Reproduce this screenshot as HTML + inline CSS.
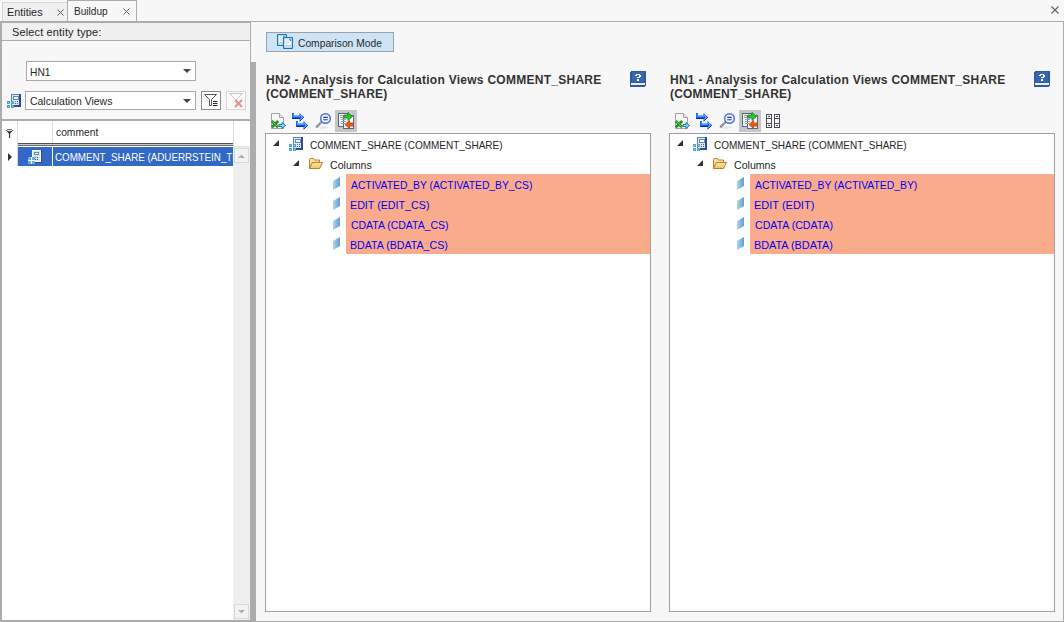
<!DOCTYPE html>
<html><head><meta charset="utf-8">
<style>
*{box-sizing:border-box;margin:0;padding:0}
html,body{width:1064px;height:622px;overflow:hidden;background:#f7f7f7;font-family:"Liberation Sans",sans-serif;font-size:11px;color:#262626}
.a{position:absolute}
.t{position:absolute;white-space:nowrap;line-height:13px;height:13px}
.ln{position:absolute;background:#acacac}
.b{font-weight:bold;font-size:12px;color:#333}
.bl{color:#0000f8}
svg{position:absolute;overflow:visible}
</style></head><body>
<div class="a" style="left:2px;top:2px;width:66px;height:20px;background:#f0f0f0;border:1px solid #d6d6d6;border-bottom:none;border-right:none"></div>
<div class="t" style="left:7px;top:6px;transform:scaleX(0.986);transform-origin:0 0;">Entities</div>
<svg style="left:57px;top:9px" width="7" height="7"><path d="M0.5 0.5L6.5 6.5M6.5 0.5L0.5 6.5" stroke="#606060" stroke-width="1"/></svg>
<div class="a" style="left:67px;top:0px;width:70px;height:22px;background:#f7f7f7;border:1px solid #acacac;border-bottom:none"></div>
<div class="t" style="left:74px;top:5px;transform:scaleX(0.917);transform-origin:0 0;">Buildup</div>
<svg style="left:123px;top:8px" width="7" height="7"><path d="M0.5 0.5L6.5 6.5M6.5 0.5L0.5 6.5" stroke="#606060" stroke-width="1"/></svg>
<svg style="left:1051px;top:6px" width="8" height="8"><path d="M0.5 0.5L7.5 7.5M7.5 0.5L0.5 7.5" stroke="#606060" stroke-width="1.1"/></svg>
<div class="ln" style="left:0;top:21px;width:1064px;height:1px"></div>
<div class="ln" style="left:0;top:22px;width:251px;height:1px"></div>
<div class="ln" style="left:0;top:21px;width:2px;height:601px"></div>
<div class="ln" style="left:0;top:620px;width:251px;height:2px"></div>
<div class="ln" style="left:250px;top:21px;width:1px;height:601px"></div>
<div class="ln" style="left:1063px;top:21px;width:1px;height:601px"></div>
<div class="ln" style="left:251px;top:621px;width:813px;height:1px"></div>
<div class="a" style="left:2px;top:23px;width:248px;height:17px;background:#f0f0f0;"></div>
<div class="a" style="left:2px;top:40px;width:248px;height:1px;background:#acacac;"></div>
<div class="t" style="left:12px;top:26px;letter-spacing:0.14px;">Select entity type:</div>
<div class="a" style="left:26px;top:61px;width:170px;height:20px;background:#fff;border:1px solid #a8a8a8"></div>
<div class="t" style="left:30px;top:66px;transform:scaleX(0.93);transform-origin:0 0;">HN1</div>
<svg style="left:183px;top:69px" width="8" height="4"><path d="M0 0H8L4 4Z" fill="#444"/></svg>
<div class="a" style="left:25px;top:91px;width:171px;height:19px;background:#fff;border:1px solid #a8a8a8"></div>
<div class="t" style="left:30px;top:95px;transform:scaleX(0.951);transform-origin:0 0;">Calculation Views</div>
<svg style="left:183px;top:99px" width="8" height="4"><path d="M0 0H8L4 4Z" fill="#444"/></svg>
<svg style="left:5px;top:93px" width="16" height="16" shape-rendering="crispEdges">
 <rect x="6" y="1" width="10" height="13" fill="#2c4c98"/>
 <rect x="6" y="1" width="8" height="11" fill="#5f82c4"/>
 <rect x="7" y="2" width="7" height="10" fill="#d8e8f8"/>
 <rect x="8" y="3" width="6" height="4" fill="#6288c8"/>
 <rect x="9" y="4" width="4" height="2" fill="#fff"/>
 <rect x="10" y="8" width="1" height="1" fill="#1fae3a"/><rect x="12" y="8" width="1" height="1" fill="#e82020"/>
 <rect x="10" y="10" width="1" height="1" fill="#555"/><rect x="12" y="10" width="1" height="1" fill="#555"/>
 <rect x="2" y="8" width="3" height="3" fill="#52a0dc"/><rect x="6" y="8" width="3" height="3" fill="#52a0dc"/>
 <rect x="2" y="12" width="3" height="3" fill="#52a0dc"/><rect x="6" y="12" width="3" height="3" fill="#52a0dc"/>
 <rect x="3" y="9" width="1" height="1" fill="#8cc4ec"/><rect x="7" y="9" width="1" height="1" fill="#8cc4ec"/>
 <rect x="3" y="13" width="1" height="1" fill="#8cc4ec"/><rect x="7" y="13" width="1" height="1" fill="#8cc4ec"/>
</svg>
<div class="a" style="left:201px;top:91px;width:20px;height:19px;background:#fff;border:1px solid #8c8c8c"></div>
<svg style="left:201px;top:91px" width="20" height="19">
 <path d="M3.5 3.5H15.5L10.5 8.5V14.5H8.5V8.5Z" fill="none" stroke="#555" stroke-width="1"/>
 <path d="M12 10.5H16.5M12 12.5H16.5M12 14.5H16.5" stroke="#222" stroke-width="1.2"/>
</svg>
<div class="a" style="left:226px;top:91px;width:20px;height:19px;background:#f9f9f9;border:1px solid #d8d8d8"></div>
<svg style="left:226px;top:91px" width="20" height="19">
 <path d="M3.5 2.5H16.5L11 8V13" fill="none" stroke="#c8c8c8" stroke-width="1"/>
 <path d="M3.5 2.5L9 8" fill="none" stroke="#c8c8c8" stroke-width="1"/>
 <path d="M9 9L16 16M16 9L9 16" stroke="#e79393" stroke-width="2.2"/>
</svg>
<div class="a" style="left:2px;top:119px;width:248px;height:2px;background:#acacac;"></div>
<div class="a" style="left:2px;top:121px;width:248px;height:499px;background:#fff;"></div>
<div class="a" style="left:17px;top:121px;width:1px;height:45px;background:#dadada;"></div>
<div class="a" style="left:52px;top:121px;width:1px;height:22px;background:#dadada;"></div>
<div class="a" style="left:233px;top:121px;width:1px;height:25px;background:#dadada;"></div>
<div class="a" style="left:18px;top:143px;width:215px;height:1px;background:#505050;"></div>
<div class="a" style="left:18px;top:144px;width:215px;height:1px;background:#c8c8c8;"></div>
<div class="a" style="left:18px;top:145px;width:215px;height:1px;background:#6a6a6a;"></div>
<div class="t" style="left:56px;top:126px;transform:scaleX(0.935);transform-origin:0 0;">comment</div>
<svg style="left:6px;top:129px" width="7" height="9">
 <path d="M0.3 1.8Q3.5 5.2 3 5.2H4Q3.5 5.2 6.7 1.8Z" fill="#333"/>
 <ellipse cx="3.5" cy="1.6" rx="2.9" ry="1.1" fill="#fff" stroke="#333" stroke-width="0.9"/>
 <rect x="3" y="5" width="1.1" height="4" fill="#333"/>
</svg>
<div class="a" style="left:18px;top:147px;width:34px;height:19px;background:#3268c6;"></div>
<div class="a" style="left:53px;top:147px;width:180px;height:19px;background:#3268c6;overflow:hidden"><div class="t" style="left:2px;top:4px;transform:scaleX(0.89);transform-origin:0 0;color:#fff">COMMENT_SHARE (ADUERRSTEIN_TEST)</div>
</div>
<svg style="left:8px;top:153px" width="4" height="8"><path d="M0 0L4 4L0 8Z" fill="#333"/></svg>
<svg style="left:26px;top:149px" width="16" height="16" shape-rendering="crispEdges">
 <rect x="6" y="1" width="10" height="13" fill="#2a4c98"/>
 <rect x="6" y="1" width="9" height="12" fill="#fff"/>
 <rect x="7" y="2" width="7" height="10" fill="#d6e6f8"/>
 <rect x="8" y="3" width="5" height="3" fill="#5b82c6"/>
 <rect x="9" y="4" width="3" height="1" fill="#fff"/>
 <rect x="9" y="8" width="1" height="1" fill="#1fae3a"/><rect x="11" y="8" width="1" height="1" fill="#e82020"/>
 <rect x="9" y="10" width="1" height="1" fill="#555"/><rect x="11" y="10" width="1" height="1" fill="#555"/>
 <rect x="2" y="8" width="7" height="7" fill="#6ab0e0"/>
 <rect x="5" y="8" width="1" height="7" fill="#fff"/><rect x="2" y="11" width="7" height="1" fill="#fff"/>
</svg>
<div class="a" style="left:233px;top:146px;width:17px;height:474px;background:#efefef;border-top:1px solid #e2e2e2"></div>
<div class="a" style="left:234px;top:148px;width:15px;height:15px;background:#f2f2f2;border:1px solid #d9d9d9"></div>
<svg style="left:238px;top:154px" width="7" height="4"><path d="M0 4H7L3.5 0.5Z" fill="#adadad"/></svg>
<div class="a" style="left:234px;top:604px;width:15px;height:15px;background:#f2f2f2;border:1px solid #d9d9d9"></div>
<svg style="left:238px;top:610px" width="7" height="4"><path d="M0 0H7L3.5 3.5Z" fill="#adadad"/></svg>
<div class="ln" style="left:250px;top:62px;width:6px;height:560px"></div>
<div class="a" style="left:266px;top:32px;width:128px;height:20px;background:#cde4f7;border:1px solid #a0a0a0"></div>
<svg style="left:276px;top:33px" width="18" height="17">
 <rect x="1.6" y="1.6" width="8.8" height="10.8" rx="0.4" fill="#fff" stroke="#1f74b6" stroke-width="1.3"/>
 <rect x="3" y="3.5" width="4" height="4.5" fill="#dcecf4"/><rect x="3" y="9" width="6" height="1.8" fill="#b0d4e6"/>
 <path d="M7.2 3Q8.6 3.2 8.9 4.8" fill="none" stroke="#1f74b6" stroke-width="1.2"/>
 <rect x="7.6" y="4.6" width="8.8" height="10.8" rx="0.4" fill="#fff" stroke="#1f74b6" stroke-width="1.3"/>
 <rect x="9" y="6.5" width="4" height="4.5" fill="#dcecf4"/><rect x="9" y="12" width="6" height="1.8" fill="#b0d4e6"/>
 <path d="M13.2 6Q14.6 6.2 14.9 7.8" fill="none" stroke="#1f74b6" stroke-width="1.2"/>
</svg>
<div class="t" style="left:298px;top:37px;transform:scaleX(0.933);transform-origin:0 0;">Comparison Mode</div>
<div class="a" style="left:0px;top:0;width:420px;height:622px">
<div class="t b" style="left:266px;top:74px;letter-spacing:0.27px;">HN2 - Analysis for Calculation Views COMMENT_SHARE</div>
<div class="t b" style="left:266px;top:88px;letter-spacing:0.18px;">(COMMENT_SHARE)</div>
<svg style="left:630px;top:71px" width="16" height="16" shape-rendering="crispEdges">
 <rect x="0" y="0" width="16" height="16" rx="2" fill="#2f5aa6"/>
 <rect x="2" y="1" width="12" height="10" fill="#3a67b4"/>
 <rect x="1" y="12" width="14" height="2" fill="#f2f2ea"/>
 <rect x="6" y="3" width="4" height="1" fill="#fff"/><rect x="5" y="4" width="2" height="1" fill="#fff"/><rect x="9" y="4" width="2" height="2" fill="#fff"/>
 <rect x="7" y="6" width="3" height="1" fill="#fff"/><rect x="7" y="8" width="2" height="2" fill="#fff"/>
</svg>
<div class="a" style="left:335px;top:110px;width:22px;height:22px;background:#c6c6c6;"></div>
<svg style="left:270px;top:112px" width="17" height="18">
 <path d="M1.5 1.5H9.5L13.5 5.5V16.5H1.5Z" fill="#f6f6f6" stroke="#a2a2a2"/>
 <path d="M9.5 1.5V5.5H13.5" fill="#e8e8e8" stroke="#a2a2a2"/>
 <path d="M1.8 9L8.2 15.2M8.2 9L1.8 15.2" stroke="#23901f" stroke-width="2.6"/><path d="M2.5 9.5L7.5 14.5" stroke="#8fe07a" stroke-width="0.7"/>
 <path d="M9 12.5H12V10.5L15.5 13.5L12 16.5V14.5H9Z" fill="#7ee6f2" stroke="#1d6fb4" stroke-width="1"/>
</svg>
<svg style="left:290px;top:111px" width="20" height="20">
 <path d="M2 2H4V4.5H9.5V2L14 6.2L9.5 10.5V8H2Z" fill="#0a5cf0"/>
 <path d="M2.5 7.5H9.5M9.8 10L13.7 6.2" stroke="#0026a8" stroke-width="0.9"/>
 <path d="M3.2 2.5V5.5H10" fill="none" stroke="#5fb0ff" stroke-width="0.8"/>
 <path d="M10.2 3.8L12.3 6.2L10.2 8.6" fill="none" stroke="#d8eeff" stroke-width="0.8"/>
 <path d="M6 10H8V12.5H13.5V10L18 14.2L13.5 18.5V16H6Z" fill="#0a5cf0"/>
 <path d="M6.5 15.5H13.5M13.8 18L17.7 14.2" stroke="#0026a8" stroke-width="0.9"/>
 <path d="M7.2 10.5V13.5H14" fill="none" stroke="#5fb0ff" stroke-width="0.8"/>
 <path d="M14.2 11.8L16.3 14.2L14.2 16.6" fill="none" stroke="#d8eeff" stroke-width="0.8"/>
</svg>
<svg style="left:314px;top:110px" width="19" height="20">
 <ellipse cx="8" cy="17.5" rx="6" ry="1.2" fill="#e6e6e6"/>
 <line x1="2.8" y1="16.6" x2="7.6" y2="12" stroke="#8c8c8c" stroke-width="2.4" stroke-linecap="round"/>
 <line x1="3.2" y1="16" x2="7" y2="12.5" stroke="#d8d8d8" stroke-width="0.8" stroke-dasharray="1 1"/>
 <circle cx="11.5" cy="8.5" r="4.8" fill="#f2f6ff" stroke="#4a72e6" stroke-width="1.5"/>
 <path d="M9.2 7.4H13.8M9.2 9.8H13.8" stroke="#1d3fb4" stroke-width="1.1"/>
</svg>
<svg style="left:336px;top:111px" width="20" height="20">
 <rect x="2.5" y="2.5" width="9" height="13" fill="#eef6fd" stroke="#56688a"/>
 <rect x="7.5" y="4.5" width="10" height="13" fill="#eef6fd" stroke="#56688a"/>
 <path d="M4 4.5H8M4 6.5H8M5 8.5H10M5 10.5H10M5 12.5H9" stroke="#8aa2c2" stroke-width="1"/>
 <path d="M5 4.5H6M5 6.5H6M6 8.5H7M6 10.5H7M6 12.5H7" stroke="#e0a820" stroke-width="1"/>
 <path d="M8 4H12V1.5L16.5 5.5L12 9.5V7H8Z" fill="#2cc42c" stroke="#138a13" stroke-width="0.8"/>
 <path d="M17.5 12H13.5V9.5L9 13.5L13.5 17.5V15H17.5Z" fill="#f25a14" stroke="#b83c0c" stroke-width="0.8"/>
</svg>
<div class="a" style="left:265px;top:133px;width:386px;height:479px;background:#fff;border:1px solid #a0a0a0"></div>
<div class="a" style="left:346px;top:174px;width:304px;height:80px;background:#f9ab8c;"></div>
<svg style="left:273px;top:140px" width="6" height="6"><path d="M6 0V6H0Z" fill="#333"/></svg>
<svg style="left:287px;top:136px" width="16" height="16" shape-rendering="crispEdges">
 <rect x="6" y="1" width="10" height="13" fill="#2c4c98"/>
 <rect x="6" y="1" width="8" height="11" fill="#5f82c4"/>
 <rect x="7" y="2" width="7" height="10" fill="#d8e8f8"/>
 <rect x="8" y="3" width="6" height="4" fill="#6288c8"/>
 <rect x="9" y="4" width="4" height="2" fill="#fff"/>
 <rect x="10" y="8" width="1" height="1" fill="#1fae3a"/><rect x="12" y="8" width="1" height="1" fill="#e82020"/>
 <rect x="10" y="10" width="1" height="1" fill="#555"/><rect x="12" y="10" width="1" height="1" fill="#555"/>
 <rect x="2" y="8" width="3" height="3" fill="#52a0dc"/><rect x="6" y="8" width="3" height="3" fill="#52a0dc"/>
 <rect x="2" y="12" width="3" height="3" fill="#52a0dc"/><rect x="6" y="12" width="3" height="3" fill="#52a0dc"/>
 <rect x="3" y="9" width="1" height="1" fill="#8cc4ec"/><rect x="7" y="9" width="1" height="1" fill="#8cc4ec"/>
 <rect x="3" y="13" width="1" height="1" fill="#8cc4ec"/><rect x="7" y="13" width="1" height="1" fill="#8cc4ec"/>
</svg>
<div class="t" style="left:310px;top:139px;transform:scaleX(0.908);transform-origin:0 0;">COMMENT_SHARE (COMMENT_SHARE)</div>
<svg style="left:293px;top:160px" width="6" height="6"><path d="M6 0V6H0Z" fill="#333"/></svg>
<svg style="left:308px;top:157px" width="16" height="13">
 <defs><linearGradient id="fg0" x1="0" y1="0" x2="0" y2="1"><stop offset="0" stop-color="#fbe7b0"/><stop offset="1" stop-color="#eec06a"/></linearGradient></defs>
 <path d="M1.5 11.5V2.5Q1.5 1.5 2.5 1.5H5.5L6.5 3H11.5V5.5" fill="url(#fg0)" stroke="#c47f24"/>
 <path d="M1.5 11.5L4.5 5.5H14.5L11.5 11.5Z" fill="url(#fg0)" stroke="#c47f24"/>
</svg>
<div class="t" style="left:330px;top:159px;transform:scaleX(0.963);transform-origin:0 0;">Columns</div>
<svg style="left:332px;top:176px" width="9" height="15"><defs><linearGradient id="cg00" x1="0" x2="1"><stop offset="0" stop-color="#b4d4ee"/><stop offset="1" stop-color="#5d9dd6"/></linearGradient></defs><path d="M1 5L8 1V10L1 14Z" fill="url(#cg00)"/></svg>
<div class="t bl" style="left:351px;top:179px;transform:scaleX(0.938);transform-origin:0 0;">ACTIVATED_BY (ACTIVATED_BY_CS)</div>
<svg style="left:332px;top:196px" width="9" height="15"><defs><linearGradient id="cg01" x1="0" x2="1"><stop offset="0" stop-color="#b4d4ee"/><stop offset="1" stop-color="#5d9dd6"/></linearGradient></defs><path d="M1 5L8 1V10L1 14Z" fill="url(#cg01)"/></svg>
<div class="t bl" style="left:350px;top:199px;transform:scaleX(0.9725);transform-origin:0 0;">EDIT (EDIT_CS)</div>
<svg style="left:332px;top:216px" width="9" height="15"><defs><linearGradient id="cg02" x1="0" x2="1"><stop offset="0" stop-color="#b4d4ee"/><stop offset="1" stop-color="#5d9dd6"/></linearGradient></defs><path d="M1 5L8 1V10L1 14Z" fill="url(#cg02)"/></svg>
<div class="t bl" style="left:351px;top:219px;transform:scaleX(0.951);transform-origin:0 0;">CDATA (CDATA_CS)</div>
<svg style="left:332px;top:236px" width="9" height="15"><defs><linearGradient id="cg03" x1="0" x2="1"><stop offset="0" stop-color="#b4d4ee"/><stop offset="1" stop-color="#5d9dd6"/></linearGradient></defs><path d="M1 5L8 1V10L1 14Z" fill="url(#cg03)"/></svg>
<div class="t bl" style="left:350px;top:239px;transform:scaleX(0.966);transform-origin:0 0;">BDATA (BDATA_CS)</div>
</div>
<div class="a" style="left:404px;top:0;width:420px;height:622px">
<div class="t b" style="left:266px;top:74px;letter-spacing:0.27px;">HN1 - Analysis for Calculation Views COMMENT_SHARE</div>
<div class="t b" style="left:266px;top:88px;letter-spacing:0.18px;">(COMMENT_SHARE)</div>
<svg style="left:630px;top:71px" width="16" height="16" shape-rendering="crispEdges">
 <rect x="0" y="0" width="16" height="16" rx="2" fill="#2f5aa6"/>
 <rect x="2" y="1" width="12" height="10" fill="#3a67b4"/>
 <rect x="1" y="12" width="14" height="2" fill="#f2f2ea"/>
 <rect x="6" y="3" width="4" height="1" fill="#fff"/><rect x="5" y="4" width="2" height="1" fill="#fff"/><rect x="9" y="4" width="2" height="2" fill="#fff"/>
 <rect x="7" y="6" width="3" height="1" fill="#fff"/><rect x="7" y="8" width="2" height="2" fill="#fff"/>
</svg>
<div class="a" style="left:335px;top:110px;width:22px;height:22px;background:#c6c6c6;"></div>
<svg style="left:270px;top:112px" width="17" height="18">
 <path d="M1.5 1.5H9.5L13.5 5.5V16.5H1.5Z" fill="#f6f6f6" stroke="#a2a2a2"/>
 <path d="M9.5 1.5V5.5H13.5" fill="#e8e8e8" stroke="#a2a2a2"/>
 <path d="M1.8 9L8.2 15.2M8.2 9L1.8 15.2" stroke="#23901f" stroke-width="2.6"/><path d="M2.5 9.5L7.5 14.5" stroke="#8fe07a" stroke-width="0.7"/>
 <path d="M9 12.5H12V10.5L15.5 13.5L12 16.5V14.5H9Z" fill="#7ee6f2" stroke="#1d6fb4" stroke-width="1"/>
</svg>
<svg style="left:290px;top:111px" width="20" height="20">
 <path d="M2 2H4V4.5H9.5V2L14 6.2L9.5 10.5V8H2Z" fill="#0a5cf0"/>
 <path d="M2.5 7.5H9.5M9.8 10L13.7 6.2" stroke="#0026a8" stroke-width="0.9"/>
 <path d="M3.2 2.5V5.5H10" fill="none" stroke="#5fb0ff" stroke-width="0.8"/>
 <path d="M10.2 3.8L12.3 6.2L10.2 8.6" fill="none" stroke="#d8eeff" stroke-width="0.8"/>
 <path d="M6 10H8V12.5H13.5V10L18 14.2L13.5 18.5V16H6Z" fill="#0a5cf0"/>
 <path d="M6.5 15.5H13.5M13.8 18L17.7 14.2" stroke="#0026a8" stroke-width="0.9"/>
 <path d="M7.2 10.5V13.5H14" fill="none" stroke="#5fb0ff" stroke-width="0.8"/>
 <path d="M14.2 11.8L16.3 14.2L14.2 16.6" fill="none" stroke="#d8eeff" stroke-width="0.8"/>
</svg>
<svg style="left:314px;top:110px" width="19" height="20">
 <ellipse cx="8" cy="17.5" rx="6" ry="1.2" fill="#e6e6e6"/>
 <line x1="2.8" y1="16.6" x2="7.6" y2="12" stroke="#8c8c8c" stroke-width="2.4" stroke-linecap="round"/>
 <line x1="3.2" y1="16" x2="7" y2="12.5" stroke="#d8d8d8" stroke-width="0.8" stroke-dasharray="1 1"/>
 <circle cx="11.5" cy="8.5" r="4.8" fill="#f2f6ff" stroke="#4a72e6" stroke-width="1.5"/>
 <path d="M9.2 7.4H13.8M9.2 9.8H13.8" stroke="#1d3fb4" stroke-width="1.1"/>
</svg>
<svg style="left:336px;top:111px" width="20" height="20">
 <rect x="2.5" y="2.5" width="9" height="13" fill="#eef6fd" stroke="#56688a"/>
 <rect x="7.5" y="4.5" width="10" height="13" fill="#eef6fd" stroke="#56688a"/>
 <path d="M4 4.5H8M4 6.5H8M5 8.5H10M5 10.5H10M5 12.5H9" stroke="#8aa2c2" stroke-width="1"/>
 <path d="M5 4.5H6M5 6.5H6M6 8.5H7M6 10.5H7M6 12.5H7" stroke="#e0a820" stroke-width="1"/>
 <path d="M8 4H12V1.5L16.5 5.5L12 9.5V7H8Z" fill="#2cc42c" stroke="#138a13" stroke-width="0.8"/>
 <path d="M17.5 12H13.5V9.5L9 13.5L13.5 17.5V15H17.5Z" fill="#f25a14" stroke="#b83c0c" stroke-width="0.8"/>
</svg>
<svg style="left:361px;top:113px" width="16" height="16" shape-rendering="crispEdges">
 <rect x="1.5" y="1.5" width="5" height="13" fill="#fff" stroke="#4a4a52"/>
 <rect x="9.5" y="1.5" width="5" height="13" fill="#fff" stroke="#4a4a52"/>
 <path d="M1 5.5H7M1 10.5H7M9 5.5H15M9 10.5H15M3 3.5H5M3 12.5H5M11 3.5H13M11 12.5H13" stroke="#4a4a52"/>
</svg>
<div class="a" style="left:265px;top:133px;width:386px;height:479px;background:#fff;border:1px solid #a0a0a0"></div>
<div class="a" style="left:346px;top:174px;width:304px;height:80px;background:#f9ab8c;"></div>
<svg style="left:273px;top:140px" width="6" height="6"><path d="M6 0V6H0Z" fill="#333"/></svg>
<svg style="left:287px;top:136px" width="16" height="16" shape-rendering="crispEdges">
 <rect x="6" y="1" width="10" height="13" fill="#2c4c98"/>
 <rect x="6" y="1" width="8" height="11" fill="#5f82c4"/>
 <rect x="7" y="2" width="7" height="10" fill="#d8e8f8"/>
 <rect x="8" y="3" width="6" height="4" fill="#6288c8"/>
 <rect x="9" y="4" width="4" height="2" fill="#fff"/>
 <rect x="10" y="8" width="1" height="1" fill="#1fae3a"/><rect x="12" y="8" width="1" height="1" fill="#e82020"/>
 <rect x="10" y="10" width="1" height="1" fill="#555"/><rect x="12" y="10" width="1" height="1" fill="#555"/>
 <rect x="2" y="8" width="3" height="3" fill="#52a0dc"/><rect x="6" y="8" width="3" height="3" fill="#52a0dc"/>
 <rect x="2" y="12" width="3" height="3" fill="#52a0dc"/><rect x="6" y="12" width="3" height="3" fill="#52a0dc"/>
 <rect x="3" y="9" width="1" height="1" fill="#8cc4ec"/><rect x="7" y="9" width="1" height="1" fill="#8cc4ec"/>
 <rect x="3" y="13" width="1" height="1" fill="#8cc4ec"/><rect x="7" y="13" width="1" height="1" fill="#8cc4ec"/>
</svg>
<div class="t" style="left:310px;top:139px;transform:scaleX(0.908);transform-origin:0 0;">COMMENT_SHARE (COMMENT_SHARE)</div>
<svg style="left:293px;top:160px" width="6" height="6"><path d="M6 0V6H0Z" fill="#333"/></svg>
<svg style="left:308px;top:157px" width="16" height="13">
 <defs><linearGradient id="fg404" x1="0" y1="0" x2="0" y2="1"><stop offset="0" stop-color="#fbe7b0"/><stop offset="1" stop-color="#eec06a"/></linearGradient></defs>
 <path d="M1.5 11.5V2.5Q1.5 1.5 2.5 1.5H5.5L6.5 3H11.5V5.5" fill="url(#fg404)" stroke="#c47f24"/>
 <path d="M1.5 11.5L4.5 5.5H14.5L11.5 11.5Z" fill="url(#fg404)" stroke="#c47f24"/>
</svg>
<div class="t" style="left:330px;top:159px;transform:scaleX(0.963);transform-origin:0 0;">Columns</div>
<svg style="left:332px;top:176px" width="9" height="15"><defs><linearGradient id="cg4040" x1="0" x2="1"><stop offset="0" stop-color="#b4d4ee"/><stop offset="1" stop-color="#5d9dd6"/></linearGradient></defs><path d="M1 5L8 1V10L1 14Z" fill="url(#cg4040)"/></svg>
<div class="t bl" style="left:351px;top:179px;transform:scaleX(0.944);transform-origin:0 0;">ACTIVATED_BY (ACTIVATED_BY)</div>
<svg style="left:332px;top:196px" width="9" height="15"><defs><linearGradient id="cg4041" x1="0" x2="1"><stop offset="0" stop-color="#b4d4ee"/><stop offset="1" stop-color="#5d9dd6"/></linearGradient></defs><path d="M1 5L8 1V10L1 14Z" fill="url(#cg4041)"/></svg>
<div class="t bl" style="left:350px;top:199px;">EDIT (EDIT)</div>
<svg style="left:332px;top:216px" width="9" height="15"><defs><linearGradient id="cg4042" x1="0" x2="1"><stop offset="0" stop-color="#b4d4ee"/><stop offset="1" stop-color="#5d9dd6"/></linearGradient></defs><path d="M1 5L8 1V10L1 14Z" fill="url(#cg4042)"/></svg>
<div class="t bl" style="left:351px;top:219px;transform:scaleX(0.963);transform-origin:0 0;">CDATA (CDATA)</div>
<svg style="left:332px;top:236px" width="9" height="15"><defs><linearGradient id="cg4043" x1="0" x2="1"><stop offset="0" stop-color="#b4d4ee"/><stop offset="1" stop-color="#5d9dd6"/></linearGradient></defs><path d="M1 5L8 1V10L1 14Z" fill="url(#cg4043)"/></svg>
<div class="t bl" style="left:350px;top:239px;transform:scaleX(0.987);transform-origin:0 0;">BDATA (BDATA)</div>
</div>
</body></html>
